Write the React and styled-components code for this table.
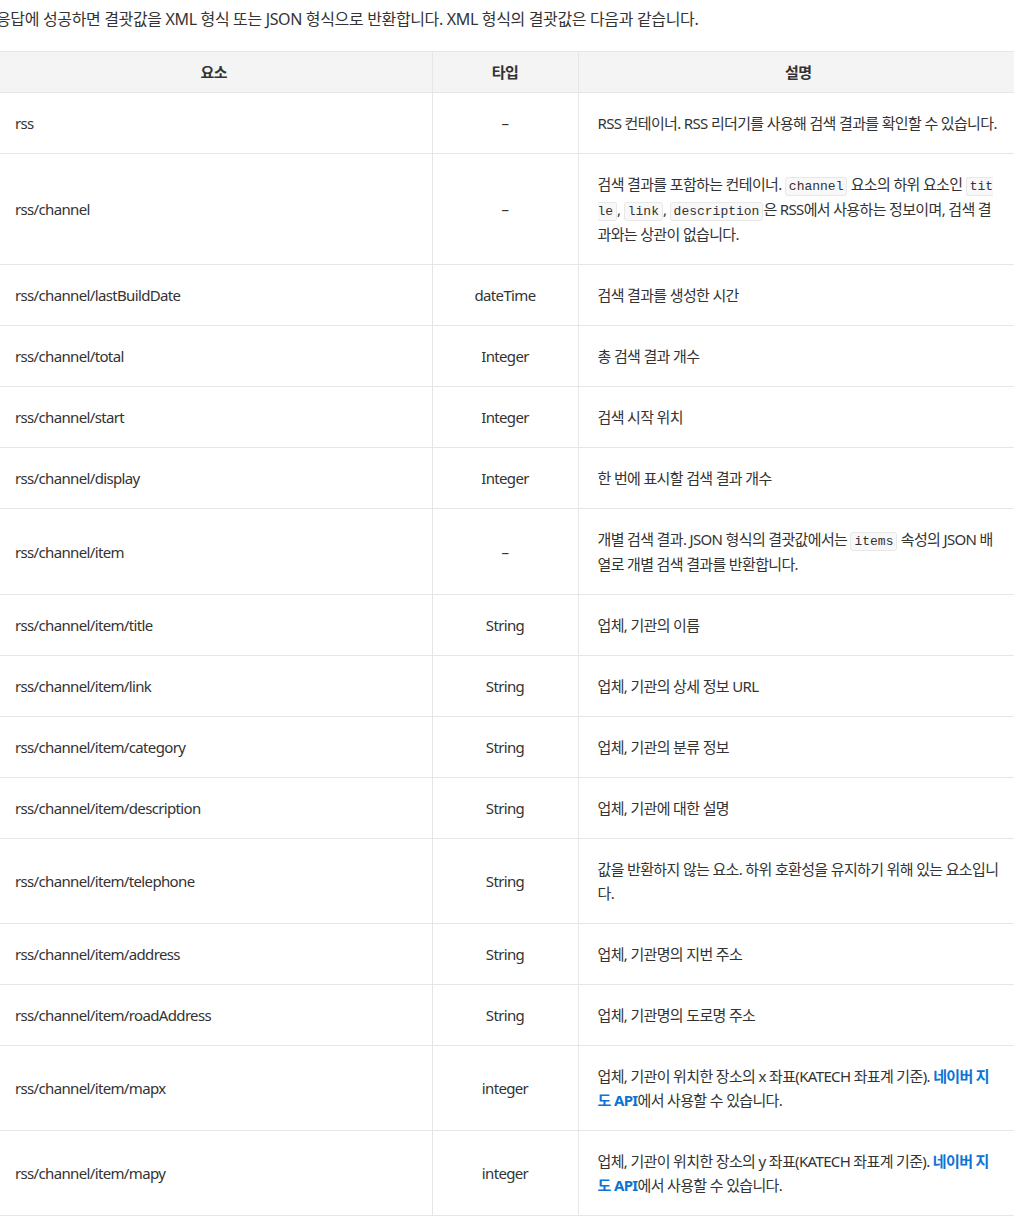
import React from "react";
import styled, { createGlobalStyle } from "styled-components";

const Global = createGlobalStyle`
  html, body { margin: 0; padding: 0; background: #fff; overflow: hidden; }
  body { font-family: "Noto Sans", "Noto Sans CJK KR", sans-serif; color: #333; }
`;

const Page = styled.div`
  margin-left: -4px;
  width: 1022px;
  padding-top: 7px;
`;

const Intro = styled.p`
  margin: 0 0 20px 0;
  font-size: 16px;
  line-height: 24px;
  color: #333;
  letter-spacing: -0.35px;
  white-space: nowrap;
`;

const Table = styled.table`
  width: 100%;
  border-collapse: collapse;
  table-layout: fixed;
  font-size: 15px;
  line-height: 24px;
  border-top: 1px solid #e6e6e6;
`;

const Th = styled.th`
  background: #f4f4f4;
  font-weight: 700;
  color: #333;
  padding: 8px 19px;
  border: 1px solid #e6e6e6;
  border-top: none;
  text-align: center;
  letter-spacing: -0.6px;
  &:first-child { border-left: none; }
  &:last-child { border-right: none; }
`;

const Td = styled.td`
  padding: 18px 19px;
  border: 1px solid #e6e6e6;
  vertical-align: middle;
  text-align: ${(p) => (p.$center ? "center" : "left")};
  letter-spacing: -0.65px;
  &:first-child { border-left: none; }
  &:last-child { border-right: none; }
`;

const Code = styled.code`
  font-family: "Liberation Mono", "DejaVu Sans Mono", monospace;
  font-size: 13px;
  line-height: 20px;
  background: #f8f8f8;
  border: 1px solid #e8e8e8;
  border-radius: 3px;
  padding: 1px 3px;
  word-break: break-all;
  letter-spacing: 0;
`;

const Link = styled.a`
  color: #0b74d4;
  font-weight: 700;
  text-decoration: none;
`;

const rows = [
  ["rss", "–", "RSS 컨테이너. RSS 리더기를 사용해 검색 결과를 확인할 수 있습니다."],
  [
    "rss/channel",
    "–",
    <>
      검색 결과를 포함하는 컨테이너. <Code>channel</Code> 요소의 하위 요소인 <Code>title</Code>, <Code>link</Code>,{" "}
      <Code>description</Code>은 RSS에서 사용하는 정보이며, 검색 결과와는 상관이 없습니다.
    </>,
  ],
  ["rss/channel/lastBuildDate", "dateTime", "검색 결과를 생성한 시간"],
  ["rss/channel/total", "Integer", "총 검색 결과 개수"],
  ["rss/channel/start", "Integer", "검색 시작 위치"],
  ["rss/channel/display", "Integer", "한 번에 표시할 검색 결과 개수"],
  [
    "rss/channel/item",
    "–",
    <>
      개별 검색 결과. JSON 형식의 결괏값에서는 <Code>items</Code> 속성의 JSON 배열로 개별 검색 결과를 반환합니다.
    </>,
  ],
  ["rss/channel/item/title", "String", "업체, 기관의 이름"],
  ["rss/channel/item/link", "String", "업체, 기관의 상세 정보 URL"],
  ["rss/channel/item/category", "String", "업체, 기관의 분류 정보"],
  ["rss/channel/item/description", "String", "업체, 기관에 대한 설명"],
  ["rss/channel/item/telephone", "String", "값을 반환하지 않는 요소. 하위 호환성을 유지하기 위해 있는 요소입니다."],
  ["rss/channel/item/address", "String", "업체, 기관명의 지번 주소"],
  ["rss/channel/item/roadAddress", "String", "업체, 기관명의 도로명 주소"],
  [
    "rss/channel/item/mapx",
    "integer",
    <>
      업체, 기관이 위치한 장소의 x 좌표(KATECH 좌표계 기준). <Link href="#">네이버 지도 API</Link>에서 사용할 수 있습니다.
    </>,
  ],
  [
    "rss/channel/item/mapy",
    "integer",
    <>
      업체, 기관이 위치한 장소의 y 좌표(KATECH 좌표계 기준). <Link href="#">네이버 지도 API</Link>에서 사용할 수 있습니다.
    </>,
  ],
];

export default function App() {
  return (
    <>
      <Global />
      <Page>
        <Intro>응답에 성공하면 결괏값을 XML 형식 또는 JSON 형식으로 반환합니다. XML 형식의 결괏값은 다음과 같습니다.</Intro>
        <Table>
          <colgroup>
            <col style={{ width: "436px" }} />
            <col style={{ width: "146px" }} />
            <col />
          </colgroup>
          <thead>
            <tr>
              <Th>요소</Th>
              <Th>타입</Th>
              <Th>설명</Th>
            </tr>
          </thead>
          <tbody>
            {rows.map(([a, b, c], i) => (
              <tr key={i}>
                <Td>{a}</Td>
                <Td $center>{b}</Td>
                <Td>{c}</Td>
              </tr>
            ))}
          </tbody>
        </Table>
      </Page>
    </>
  );
}
